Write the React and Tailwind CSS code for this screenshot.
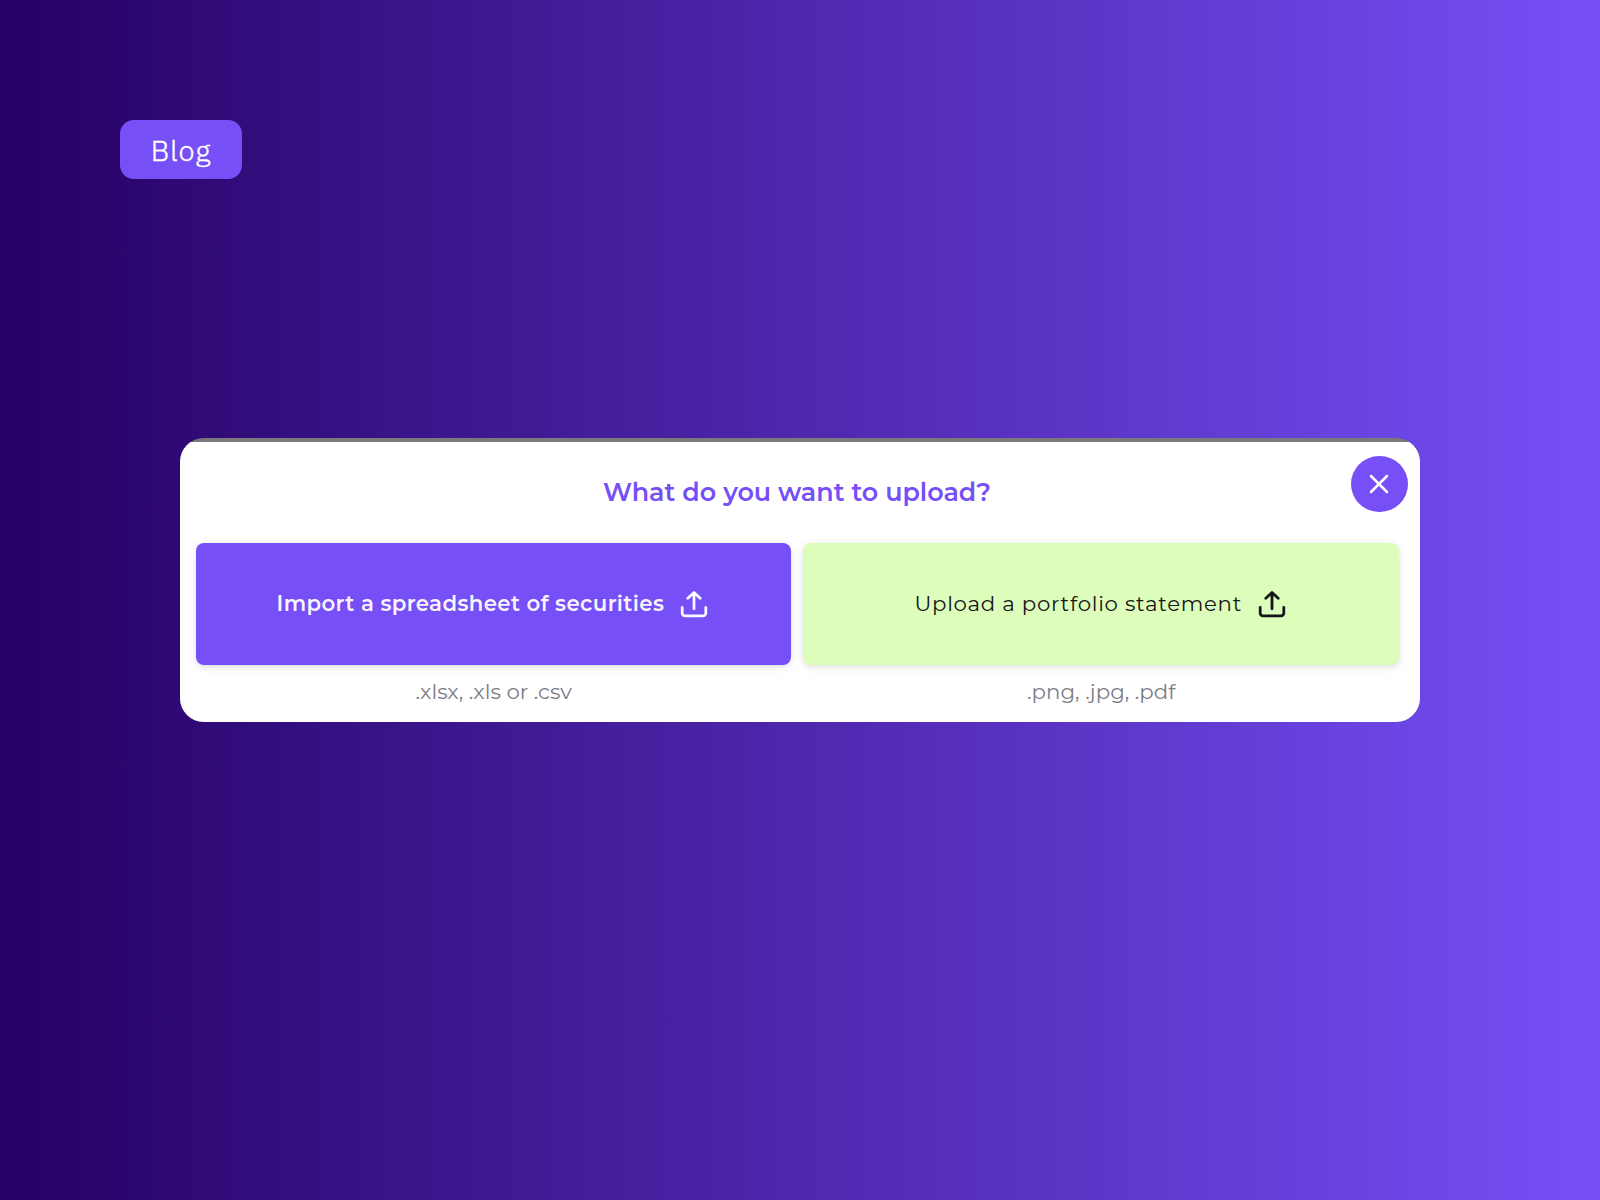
function UploadIcon() {
  return (
    <svg className="size-8 shrink-0" viewBox="0 0 32 32" fill="none" stroke="currentColor" strokeWidth="2.8" strokeLinecap="round" strokeLinejoin="round">
      <path d="M4.2 19.4v5.8a2.7 2.7 0 0 0 2.7 2.7h18.2a2.7 2.7 0 0 0 2.7-2.7v-5.8" />
      <path d="M16 20.8V6" />
      <path d="M9.8 10.2L16 4.4l6.2 5.8" />
      <path d="M16 4.2l-3.6 3.8h7.2z" fill="currentColor" stroke="none" />
    </svg>
  );
}

const shadow = "shadow-[0_2px_4px_rgba(0,0,0,0.07),0_2px_12px_rgba(0,0,0,0.07)]";

function UploadOption({ label, hint, width, button }) {
  return (
    <div className={"flex flex-col items-center " + width}>
      <button className={"flex h-[121.4px] w-full items-center justify-center rounded-[8px] pt-px text-[21.3px] " + shadow + " " + button}>
        <span className="whitespace-nowrap">{label}</span>
        <UploadIcon />
      </button>
      <p className="mt-[13px] text-[21.3px] leading-[26px] whitespace-nowrap text-[#7c7c86]">{hint}</p>
    </div>
  );
}

export default function App() {
  return (
    <main className="flex h-[1200px] w-[1600px] flex-col overflow-hidden bg-linear-[90deg,#260064,#764ff7] font-[Montserrat,sans-serif]">
      <span className="mt-[120px] ml-[120px] flex h-[59.3px] w-[122px] items-center justify-center rounded-[14px] bg-[#764ff7] pt-px font-['IBM_Plex_Sans','Open_Sans',sans-serif] text-[29px] leading-none font-light tracking-[0.025em] text-white [-webkit-text-stroke:0.4px_white]">
        Blog
      </span>
      <section className="relative mt-[258.7px] ml-[179.7px] h-[284.3px] w-[1240.6px] overflow-hidden rounded-[24px] bg-[#7b797c]">
        <div className="mt-[3.6px] h-full bg-white pt-[34px]">
          <h1 className="mr-[6px] text-center text-[25.4px] leading-[32px] font-semibold text-[#764ff7]">What do you want to upload?</h1>
          <div className="mt-[35.6px] ml-[16.7px] flex gap-[12.3px]">
            <UploadOption
              label="Import a spreadsheet of securities"
              hint=".xlsx, .xls or .csv"
              width="w-[594.6px]"
              button="gap-[13.5px] bg-[#764ff7] pr-px font-semibold tracking-[0.017em] text-white/95"
            />
            <UploadOption
              label="Upload a portfolio statement"
              hint=".png, .jpg, .pdf"
              width="w-[596px]"
              button="gap-[14px] bg-[#ddfdba] font-normal tracking-[0.033em] text-[#14161a]"
            />
          </div>
        </div>
        <button aria-label="Close" className="absolute top-[17.6px] right-[12.6px] flex size-[56.5px] items-center justify-center rounded-full bg-[#764ff7] text-white">
          <svg className="size-6" viewBox="0 0 24 24" fill="none" stroke="currentColor" strokeWidth="2.5" strokeLinecap="round">
            <path d="M4 4l16 16M20 4L4 20" />
          </svg>
        </button>
      </section>
    </main>
  );
}
